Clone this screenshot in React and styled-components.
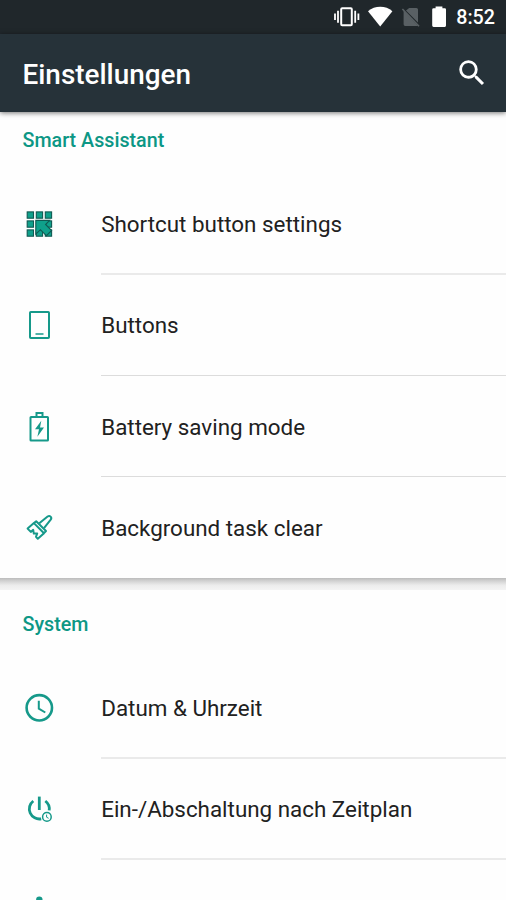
import React from "react";
import styled, { createGlobalStyle } from "styled-components";

const GlobalStyle = createGlobalStyle`
  * {
    box-sizing: border-box;
  }
  body {
    margin: 0;
    background-color: #fefefe;
    font-family: Roboto, "Noto Sans", sans-serif;
  }
`;

const Screen = styled.div`
  display: flex;
  flex-direction: column;
  width: 506px;
  height: 900px;
  overflow: hidden;
`;

const StatusBar = styled.div`
  display: flex;
  flex-shrink: 0;
  justify-content: flex-end;
  align-items: center;
  height: 34px;
  padding-right: 11px;
  color: #ffffff;
  background-color: #20272b;

  .time {
    margin-left: 9px;
    padding-top: 2px;
    font-size: 19.7px;
    font-weight: 500;
    line-height: 32px;
  }
`;

const AppBar = styled.header`
  position: relative;
  display: flex;
  flex-shrink: 0;
  justify-content: space-between;
  align-items: center;
  height: 78px;
  padding: 0 17px 0 22.5px;
  color: #ffffff;
  background-color: #263239;
  box-shadow: 0 1px 5px rgba(0, 0, 0, 0.55);

  h1 {
    margin: 2px 0 0;
    font-size: 27.9px;
    font-weight: 500;
  }
  svg {
    display: block;
  }
`;

const Content = styled.main`
  flex: 1;
  min-height: 0;
  overflow: hidden;
`;

const Section = styled.section`
  padding-top: ${(props) => (props.$scrolled ? "0" : "6px")};
`;

const SectionTitle = styled.h2`
  height: 61.6px;
  margin: 0;
  padding: 16px 22.5px 0;
  color: #0c9785;
  font-size: 19.7px;
  font-weight: 500;
  line-height: 26px;
`;

const Gap = styled.div`
  height: 11.6px;
  background: linear-gradient(#bcbcbc, #d2d2d2 25%, #ececec 60%, #f4f4f4);
`;

const Row = styled.div`
  display: flex;
  align-items: center;
  height: 101.2px;
  padding-left: 23px;
`;

const RowIcon = styled.svg`
  flex-shrink: 0;
  width: 32px;
  height: 32px;
  margin-right: 46px;
  fill: none;
  stroke: #16998a;
  stroke-width: 2;
`;

const RowLabel = styled.div`
  display: flex;
  flex: 1;
  align-items: center;
  height: 100%;
  padding-top: ${(props) => (props.$last ? "3px" : "1px")};
  padding-left: 0.2px;
  border-bottom: ${(props) => (props.$thin ? "1px solid #dcdcdc" : "2px solid #eaeaea")};
  border-color: ${(props) => (props.$last ? "transparent" : null)};
  color: #212121;
  font-size: 22.4px;
  white-space: nowrap;
`;

const ShortcutIcon = () => (
  <RowIcon viewBox="0 0 32 32">
    <g fill="#0fa08b" stroke="#0f5a52" strokeWidth="1.1">
      <rect x="4.2" y="3.9" width="6.3" height="6.3" />
      <rect x="13.3" y="3.9" width="6.3" height="6.3" />
      <rect x="22.3" y="3.9" width="6.3" height="6.3" />
      <rect x="4.2" y="12.9" width="6.3" height="6.3" />
      <rect x="4.2" y="21.9" width="6.3" height="6.3" />
      <rect x="13.3" y="21.9" width="6.3" height="6.3" />
      <rect x="22.3" y="12.9" width="6.3" height="6.3" />
      <rect x="22.3" y="21.9" width="6.3" height="6.3" />
      <path d="M12.8 12.4H26.6L22.6 16.5L28.6 22.5L23.4 27.7L17.4 21.7L12.8 26.1Z" />
    </g>
  </RowIcon>
);

const PhoneIcon = () => (
  <RowIcon viewBox="0 0 32 32">
    <rect x="7" y="3" width="19" height="26" rx="0.8" />
    <path d="M12.5 25h8" strokeWidth="1.5" />
  </RowIcon>
);

const BatteryIcon = () => (
  <RowIcon viewBox="0 0 32 32">
    <rect x="7.5" y="6" width="17.5" height="23.6" rx="0.6" />
    <path d="M13.5 5.5V1.9H19.5V5.5" />
    <path d="M18.3 9.7L12 18.2H16L14.4 25.8L21 16.6H17Z" fill="#16998a" stroke="none" />
  </RowIcon>
);

const BrushIcon = () => (
  <RowIcon viewBox="0 0 32 32" strokeLinejoin="round">
    <path d="M16.3 11.3L24.6 4.5C26.8 2.9 29.4 5.4 27.7 7.7L21 16.1" />
    <path d="M10.9 11.1L13.2 9.3L23 19L21 21.2Z" />
    <path d="M10.9 11.1L4.6 16.6L7.8 19.9L10.2 17.8L10.8 21.6L14.2 21.4L13 24.9L14.8 26.8L21 21.2" />
  </RowIcon>
);

const ClockIcon = () => (
  <RowIcon viewBox="0 0 32 32">
    <circle cx="16.3" cy="15.8" r="12.7" strokeWidth="2.6" />
    <path d="M15.8 8.8V16.7L22.3 20.5" />
  </RowIcon>
);

const PowerIcon = () => (
  <RowIcon viewBox="0 0 32 32">
    <g strokeWidth="2.8">
      <path d="M16.3 3.6V17" />
      <path d="M10.3 8A10 10 0 0 0 18.2 25.8" />
      <path d="M22.3 8A10 10 0 0 1 26.2 17.4" />
    </g>
    <circle cx="23.9" cy="23.9" r="4.3" strokeWidth="1.5" />
    <path d="M23.6 21.6V24.2L25.6 25.3" strokeWidth="1" />
  </RowIcon>
);

const AccessibilityIcon = () => (
  <RowIcon viewBox="0 0 32 32">
    <circle cx="16.3" cy="4.6" r="3.2" fill="#16998a" stroke="none" />
    <path d="M4.5 11H28M16.3 11V29" />
  </RowIcon>
);

const StatusIcons = () => (
  <svg width="114" height="34" viewBox="333 0 114 34" fill="#ffffff">
    <rect x="341.2" y="8.2" width="10.6" height="17" rx="1" fill="none" stroke="#ffffff" strokeWidth="2" />
    <path d="M338 10.8v12M355.2 10.8v12M335 13.6v6.4M358.4 13.6v6.4" stroke="#ffffff" strokeWidth="1.8" />
    <path d="M368 11.2C374.8 5.3 385.8 5.3 392.4 11.2L380.2 26.4Z" />
    <path
      d="M409.2 8H416.4Q418 8 418 9.6V22.6L406 10.4ZM403.6 10.6L418 25.9H405.2Q403.6 25.9 403.6 24.3Z"
      fill="#596064"
    />
    <path d="M402.4 9L419 26.3" stroke="#596064" strokeWidth="1.6" />
    <path d="M435.6 6.4H442.4V8.2H444.8Q446 8.2 446 9.4V25.6Q446 26.9 444.8 26.9H433.6Q432.2 26.9 432.2 25.6V9.4Q432.2 8.2 433.6 8.2H435.6Z" />
  </svg>
);

const SearchIcon = () => (
  <svg width="34" height="34" viewBox="0 0 24 24" fill="#ffffff">
    <path d="M15.5 14h-.79l-.28-.27A6.47 6.47 0 0 0 16 9.5 6.5 6.5 0 1 0 9.5 16c1.61 0 3.09-.59 4.23-1.57l.27.28v.79l5 4.99L20.49 19l-4.99-5zm-6 0C7.01 14 5 11.99 5 9.5S7.01 5 9.5 5 14 7.01 14 9.5 11.99 14 9.5 14z" />
  </svg>
);

const assistantItems = [
  { label: "Shortcut button settings", Icon: ShortcutIcon },
  { label: "Buttons", Icon: PhoneIcon, thin: true },
  { label: "Battery saving mode", Icon: BatteryIcon, thin: true },
  { label: "Background task clear", Icon: BrushIcon },
];

const systemItems = [
  { label: "Datum & Uhrzeit", Icon: ClockIcon },
  { label: "Ein-/Abschaltung nach Zeitplan", Icon: PowerIcon },
  { label: "", Icon: AccessibilityIcon },
];

const SettingsGroup = ({ title, items, scrolled }) => (
  <Section $scrolled={scrolled}>
    <SectionTitle>{title}</SectionTitle>
    {items.map(({ label, Icon, thin }, index) => (
      <Row key={index}>
        <Icon />
        <RowLabel $thin={thin} $last={index === items.length - 1}>
          {label}
        </RowLabel>
      </Row>
    ))}
  </Section>
);

const App = () => {
  return (
    <>
      <GlobalStyle />
      <Screen>
        <StatusBar>
          <StatusIcons />
          <span className="time">8:52</span>
        </StatusBar>
        <AppBar>
          <h1>Einstellungen</h1>
          <SearchIcon />
        </AppBar>
        <Content>
          <SettingsGroup title="Smart Assistant" items={assistantItems} scrolled />
          <Gap />
          <SettingsGroup title="System" items={systemItems} />
        </Content>
      </Screen>
    </>
  );
};

export default App;
